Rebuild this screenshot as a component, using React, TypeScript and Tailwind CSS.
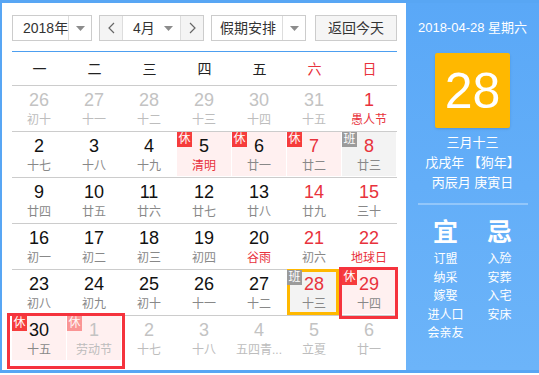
type Day = { d: number; l: string; o?: boolean; f?: boolean; tag?: "休" | "班" };

const weeks: Day[][] = [
  [
    { d: 26, l: "初十", o: true },
    { d: 27, l: "十一", o: true },
    { d: 28, l: "十二", o: true },
    { d: 29, l: "十三", o: true },
    { d: 30, l: "十四", o: true },
    { d: 31, l: "十五", o: true },
    { d: 1, l: "愚人节", f: true },
  ],
  [
    { d: 2, l: "十七" },
    { d: 3, l: "十八" },
    { d: 4, l: "十九" },
    { d: 5, l: "清明", f: true, tag: "休" },
    { d: 6, l: "廿一", tag: "休" },
    { d: 7, l: "廿二", tag: "休" },
    { d: 8, l: "廿三", tag: "班" },
  ],
  [
    { d: 9, l: "廿四" },
    { d: 10, l: "廿五" },
    { d: 11, l: "廿六" },
    { d: 12, l: "廿七" },
    { d: 13, l: "廿八" },
    { d: 14, l: "廿九" },
    { d: 15, l: "三十" },
  ],
  [
    { d: 16, l: "初一" },
    { d: 17, l: "初二" },
    { d: 18, l: "初三" },
    { d: 19, l: "初四" },
    { d: 20, l: "谷雨", f: true },
    { d: 21, l: "初六" },
    { d: 22, l: "地球日", f: true },
  ],
  [
    { d: 23, l: "初八" },
    { d: 24, l: "初九" },
    { d: 25, l: "初十" },
    { d: 26, l: "十一" },
    { d: 27, l: "十二" },
    { d: 28, l: "十三", tag: "班" },
    { d: 29, l: "十四", tag: "休" },
  ],
  [
    { d: 30, l: "十五", tag: "休" },
    { d: 1, l: "劳动节", o: true, tag: "休" },
    { d: 2, l: "十七", o: true },
    { d: 3, l: "十八", o: true },
    { d: 4, l: "五四青...", o: true },
    { d: 5, l: "立夏", o: true },
    { d: 6, l: "廿一", o: true },
  ],
];

const weekdays = ["一", "二", "三", "四", "五", "六", "日"];

function Caret() {
  return (
    <svg width="9" height="5" viewBox="0 0 9 5">
      <path d="M0 0 H9 L4.5 5 Z" fill="#8c8c8c" />
    </svg>
  );
}

function Chevron({ dir }: { dir: "l" | "r" }) {
  return (
    <svg width="7" height="12" viewBox="0 0 7 12">
      <polyline
        points={dir === "l" ? "6,1 1,6 6,11" : "1,1 6,6 1,11"}
        fill="none"
        stroke="#666"
        strokeWidth="1.2"
      />
    </svg>
  );
}

function Cell({ day, col }: { day: Day; col: number }) {
  const weekend = col >= 5;
  const numColor = day.o ? "text-[#c3c3c3]" : weekend ? "text-[#e8323c]" : "text-[#111]";
  const lunarColor = day.o ? "text-[#bdbdbd]" : day.f ? "text-[#e8323c]" : "text-[#888]";
  const bg = day.tag === "休" ? "bg-[#fff0f0]" : day.tag === "班" ? "bg-[#f3f3f3]" : "bg-white";
  const badge = day.tag === "休" ? "bg-[#f63c3c]" : "bg-[#9b9b9b]";
  return (
    <div className="w-[55px] h-[45px] pr-px pb-px">
      <div className={`relative h-full flex flex-col items-center ${bg}`}>
        {day.tag && (
          <div
            className={`absolute left-0 top-0 z-20 w-[15px] h-[15px] text-[12px] leading-[15px] text-center text-white ${badge} ${day.o ? "opacity-50" : ""}`}
          >
            {day.tag}
          </div>
        )}
        <div className={`pt-[3px] text-[18px] leading-[22px] ${numColor}`}>{day.d}</div>
        <div className={`text-[12px] leading-[18px] whitespace-nowrap ${lunarColor}`}>{day.l}</div>
      </div>
    </div>
  );
}

export default function App() {
  return (
    <div
      className="w-[539px] h-[373px] flex bg-white border-l-2 border-t-[3px] border-b-[3px] border-[#58a6f4] overflow-hidden"
      style={{ fontFamily: '"Liberation Sans", "Noto Sans CJK SC", sans-serif' }}
    >
      {/* Calendar */}
      <div className="w-[404px] shrink-0 pl-[10px] pt-[12px]">
        {/* Toolbar */}
        <div className="flex items-center h-[26px] text-[14px] text-[#333] whitespace-nowrap">
          <div className="flex h-[26px] w-[80px] border border-[#ccc]">
            <div className="flex-1 flex items-center pl-[10px]">2018年</div>
            <div className="w-[23px] shrink-0 border-l border-[#ddd] flex items-center justify-center">
              <Caret />
            </div>
          </div>
          <div className="ml-[7px] flex h-[26px] w-[105px] border border-[#ccc]">
            <div className="w-[23px] bg-[#f4f4f4] border-r border-[#ddd] flex items-center justify-center">
              <Chevron dir="l" />
            </div>
            <div className="flex-1 flex items-center justify-between pl-[10px] pr-[7px]">
              <span>4月</span>
              <Caret />
            </div>
            <div className="w-[23px] bg-[#f4f4f4] border-l border-[#ddd] flex items-center justify-center">
              <Chevron dir="r" />
            </div>
          </div>
          <div className="ml-[7px] flex h-[26px] w-[95px] border border-[#ccc]">
            <div className="flex-1 min-w-0 overflow-hidden flex items-center pl-[8px]">假期安排</div>
            <div className="w-[23px] shrink-0 border-l border-[#ddd] flex items-center justify-center">
              <Caret />
            </div>
          </div>
          <div className="ml-[9px] h-[26px] w-[82px] border border-[#ccc] bg-[#f5f5f5] flex items-center justify-center">
            返回今天
          </div>
        </div>

        {/* Weekday header */}
        <div className="mt-[10px] w-[385px] border-t border-[#4d9ff0]">
          <div className="flex h-[34px] border-b border-[#ccc] pt-[2px]">
            {weekdays.map((w, i) => (
              <div
                key={w}
                className={`w-[55px] flex items-center justify-center text-[14px] ${i >= 5 ? "text-[#e8323c]" : "text-[#222]"}`}
              >
                {w}
              </div>
            ))}
          </div>

          {/* Days */}
          <div className="relative">
            {weeks.map((week, r) => (
              <div key={r} className={`flex ${r < 5 ? "border-b border-[#ccc]" : ""}`}>
                {week.map((day, c) => (
                  <Cell key={c} day={day} col={c} />
                ))}
              </div>
            ))}
            {/* selected day */}
            <div className="absolute left-[275px] top-[183px] w-[52px] h-[46px] border-[3px] border-[#ffb800] z-10" />
            {/* today */}
            <div className="absolute left-[327px] top-[181px] w-[59px] h-[52px] border-[3px] border-[#f5333d] z-10" />
            {/* holiday range */}
            <div className="absolute left-[-5px] top-[227px] w-[118px] h-[56px] border-[3px] border-[#f5333d] z-10" />
          </div>
        </div>
      </div>

      {/* Side panel */}
      <div className="flex-1 bg-linear-to-b from-[#5aa8f7] to-[#6cb4f9] text-white flex flex-col items-center">
        <div className="mt-[17px] text-[13px] leading-[16px] whitespace-nowrap">2018-04-28 星期六</div>
        <div className="mt-[17px] w-[75px] h-[75px] rounded-[2px] bg-[#ffb800] shadow-sm flex items-center justify-center text-[50px] leading-none">
          28
        </div>
        <div className="mt-[5px] text-[13px] leading-[20px] text-center whitespace-nowrap">
          <div>三月十三</div>
          <div>戊戌年 【狗年】</div>
          <div>丙辰月 庚寅日</div>
        </div>
        <div className="mt-[10px] w-[110px] h-[2px] bg-white/30" />
        <div className="mt-[13px] grid grid-cols-2 w-[108px] text-center">
          <div>
            <div className="text-[25px] leading-[28px] font-bold">宜</div>
            <div className="mt-[4px] text-[12px] leading-[18.5px]">
              <div>订盟</div>
              <div>纳采</div>
              <div>嫁娶</div>
              <div>进人口</div>
              <div>会亲友</div>
            </div>
          </div>
          <div>
            <div className="text-[25px] leading-[28px] font-bold">忌</div>
            <div className="mt-[4px] text-[12px] leading-[18.5px]">
              <div>入殓</div>
              <div>安葬</div>
              <div>入宅</div>
              <div>安床</div>
            </div>
          </div>
        </div>
      </div>
    </div>
  );
}
